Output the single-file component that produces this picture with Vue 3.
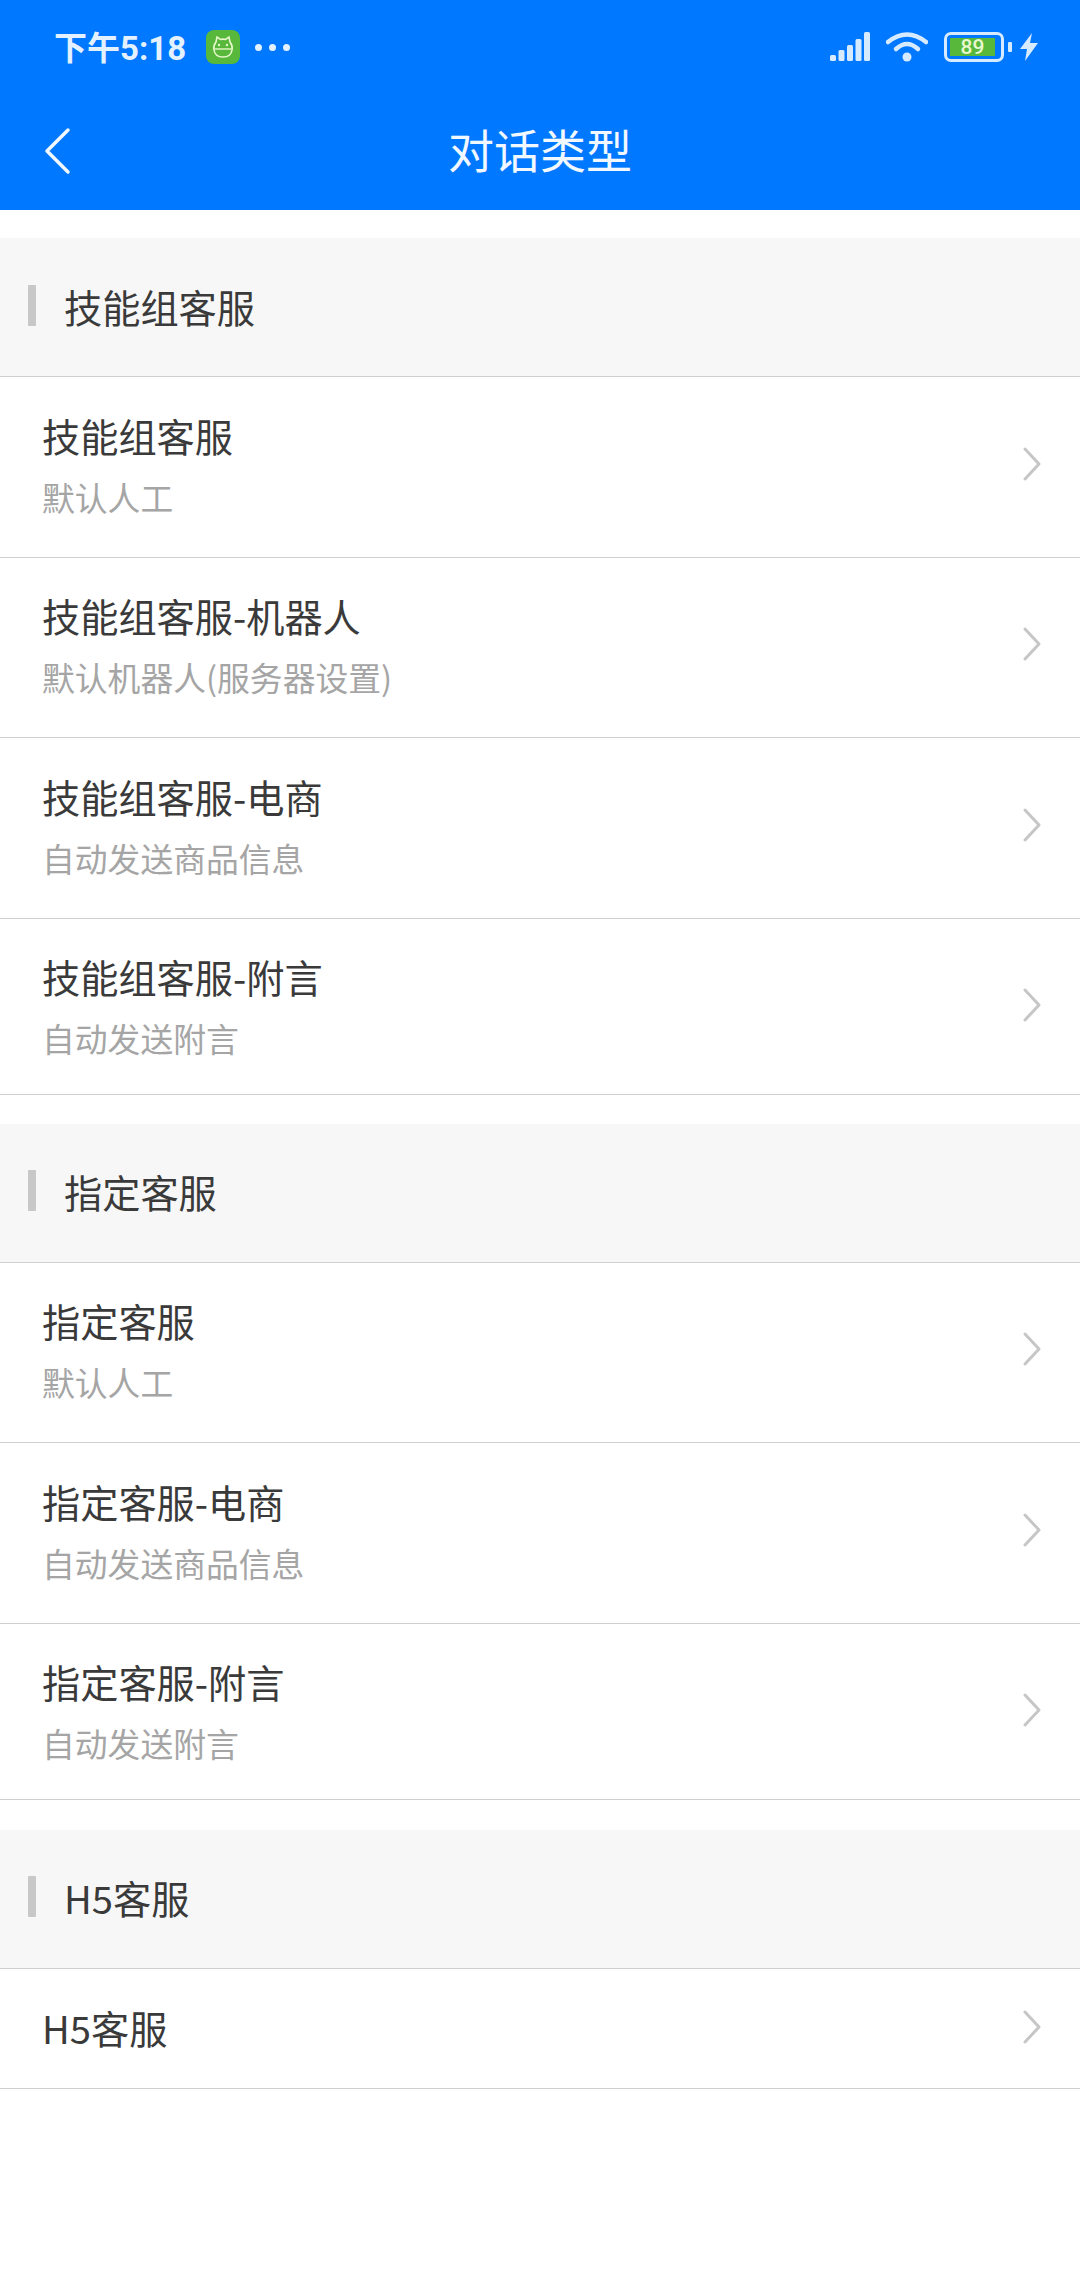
<template>
  <div class="page">
    <header class="top">
      <div class="status">
        <div class="status-left">
          <span class="time">下午5:18</span>
          <svg class="app-icon" width="34" height="34" viewBox="0 0 34 34">
            <rect width="34" height="34" rx="8" fill="#57b83c"/>
            <path d="M10 12 L11 7 L14.5 9.5 Q17 8.8 19.5 9.5 L23 7 L24 12 Q27 16 26 20 Q25 27 17 27 Q9 27 8 20 Q7 16 10 12 Z" fill="none" stroke="#e6f7c8" stroke-width="1.6"/>
            <path d="M8.5 19 H25.5" stroke="#e6f7c8" stroke-width="1.4"/>
            <circle cx="13" cy="15" r="1.2" fill="#e6f7c8"/>
            <circle cx="21" cy="15" r="1.2" fill="#e6f7c8"/>
          </svg>
          <span class="dots"><i></i><i></i><i></i></span>
        </div>
        <div class="status-right">
          <svg width="40" height="30" viewBox="0 0 40 30">
            <rect x="0" y="23" width="6" height="6" rx="1.5" fill="#d6ebff"/>
            <rect x="8.500" y="18" width="6" height="11" rx="1.500" fill="#d6ebff"/>
            <rect x="17" y="13" width="6" height="16" rx="1.500" fill="#d6ebff"/>
            <rect x="25.500" y="7" width="6" height="22" rx="1.500" fill="#d6ebff"/>
            <rect x="34" y="0" width="6" height="29" rx="1.500" fill="#d6ebff"/>
          </svg>
          <svg class="wifi" width="42" height="30" viewBox="0 0 42 30">
            <path d="M2 10 Q21 -5 40 10" fill="none" stroke="#d6ebff" stroke-width="4.500" stroke-linecap="round"/>
            <path d="M10 17 Q21 7 32 17" fill="none" stroke="#d6ebff" stroke-width="4.500" stroke-linecap="round"/>
            <circle cx="21" cy="25" r="4.500" fill="#d6ebff"/>
          </svg>
          <div class="battery">
            <div class="battery-body"><span class="battery-fill">89</span></div>
            <span class="battery-nub"></span>
          </div>
          <svg width="18" height="28" viewBox="0 0 18 28">
            <path d="M12 0 L0 16 H7 L5 28 L18 10 H10 Z" fill="#d6ebff"/>
          </svg>
        </div>
      </div>
      <nav class="nav">
        <svg class="back" width="28" height="48" viewBox="0 0 28 48">
          <path d="M25 3 L4 24 L25 45" fill="none" stroke="#f2f8ff" stroke-width="3.500" stroke-linecap="round" stroke-linejoin="round"/>
        </svg>
        <h1>对话类型</h1>
      </nav>
    </header>

    <section v-for="group in groups" :key="group.title" class="group">
      <div class="group-head">
        <span class="bar"></span>
        <span class="group-title">{{ group.title }}</span>
      </div>
      <div v-for="item in group.items" :key="item.name" class="row" :class="{ single: !item.desc }">
        <div class="row-text">
          <div class="row-name">{{ item.name }}</div>
          <div v-if="item.desc" class="row-desc">{{ item.desc }}</div>
        </div>
        <svg class="arrow" width="20" height="36" viewBox="0 0 20 36">
          <path d="M3 3 L17 18 L3 33" fill="none" stroke="#c6c6c6" stroke-width="3" stroke-linecap="round" stroke-linejoin="round"/>
        </svg>
      </div>
    </section>
  </div>
</template>

<script setup>
const groups = [
  {
    title: '技能组客服',
    items: [
      { name: '技能组客服', desc: '默认人工' },
      { name: '技能组客服-机器人', desc: '默认机器人(服务器设置)' },
      { name: '技能组客服-电商', desc: '自动发送商品信息' },
      { name: '技能组客服-附言', desc: '自动发送附言' }
    ]
  },
  {
    title: '指定客服',
    items: [
      { name: '指定客服', desc: '默认人工' },
      { name: '指定客服-电商', desc: '自动发送商品信息' },
      { name: '指定客服-附言', desc: '自动发送附言' }
    ]
  },
  {
    title: 'H5客服',
    items: [{ name: 'H5客服' }]
  }
]
</script>

<style scoped>
.page {
  width: 1080px;
  height: 2280px;
  overflow: hidden;
  background: #fff;
  font-family: "Noto Sans CJK SC", "Noto Sans", sans-serif;
  color: #3a3a3a;
}

.top {
  background: #0078ff;
  height: 210px;
}

.status {
  height: 94px;
  padding: 0 42px 0 54px;
  display: flex;
  justify-content: space-between;
  align-items: center;
}

.status-left,
.status-right {
  display: flex;
  align-items: center;
}

.time {
  margin-bottom: 2px;
  font-size: 33px;
  font-weight: 700;
  color: #e4f1ff;
  font-family: "Roboto", "Noto Sans CJK SC", sans-serif;
}

.app-icon {
  margin-left: 20px;
}

.dots {
  display: flex;
  gap: 7px;
  margin-left: 15px;
}

.dots i {
  width: 7px;
  height: 7px;
  border-radius: 50%;
  background: #e4f1ff;
}

.wifi {
  margin-left: 16px;
}

.battery {
  display: flex;
  align-items: center;
  margin-left: 16px;
  margin-right: 8px;
}

.battery-body {
  width: 60px;
  height: 30px;
  box-sizing: border-box;
  border: 3px solid #d6ebff;
  border-radius: 7px;
  padding: 3px;
}

.battery-fill {
  display: block;
  width: 45px;
  height: 18px;
  background: #57b83c;
  color: #e9f8cf;
  font-size: 21px;
  font-weight: 500;
  line-height: 18px;
  text-align: center;
  font-family: "Roboto", sans-serif;
}

.battery-nub {
  width: 4px;
  height: 10px;
  margin-left: 4px;
  background: #d6ebff;
  border-radius: 1px;
}

.nav {
  position: relative;
  height: 116px;
  display: flex;
  align-items: center;
  justify-content: center;
}

.back {
  position: absolute;
  left: 43px;
  top: 33px;
}

.nav h1 {
  margin: 0 0 8px;
  font-size: 46px;
  font-weight: 400;
  color: #f2f8ff;
}

.group {
  margin-top: 29px;
}

.group:first-of-type {
  margin-top: 28px;
}

.group:last-of-type {
  margin-top: 30px;
}

.group-head {
  height: 134px;
  padding: 0 0 4px 28px;
  display: flex;
  align-items: center;
  background: #f7f7f7;
  border-bottom: 1px solid #cfcfcf;
}

.bar {
  width: 8px;
  height: 41px;
  background: #c8c8c8;
  border-radius: 1px;
}

.group-title {
  margin: 3px 0 0 28px;
  font-size: 38.2px;
  line-height: 50px;
}

.row {
  height: 179.5px;
  padding: 0 38px 0 42px;
  display: flex;
  align-items: center;
  justify-content: space-between;
  border-bottom: 1px solid #cfcfcf;
}

.row:last-child {
  height: 175px;
}

.row.single {
  height: 119px;
}

.row-text {
  padding-bottom: 6px;
}

.row:last-child .row-text {
  padding-bottom: 3px;
}

.single:last-child .row-text {
  padding-bottom: 0;
}

.row-name {
  font-size: 38.2px;
  line-height: 50px;
}

.row-desc {
  margin-top: 16px;
  font-size: 32.8px;
  line-height: 40px;
  color: #a5a5a5;
}

.arrow {
  margin-bottom: 6px;
}

.row:last-child .arrow {
  margin-bottom: 3px;
}
</style>
